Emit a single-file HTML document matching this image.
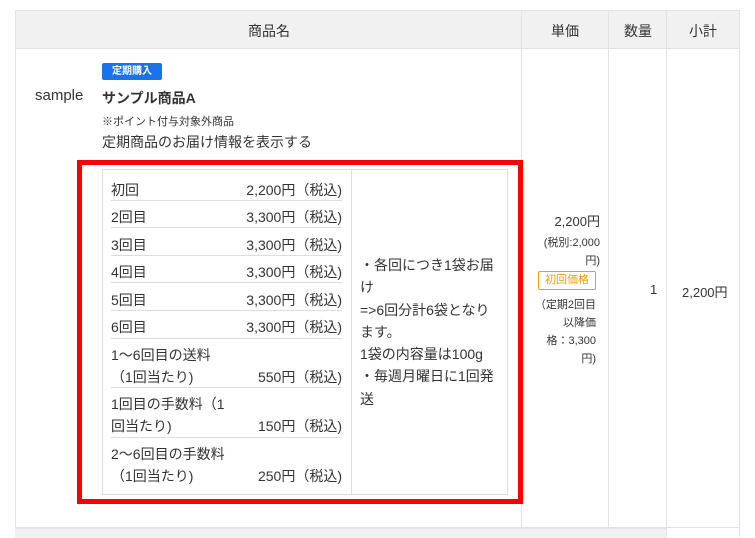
<!DOCTYPE html>
<html><head><meta charset="utf-8"><style>
body{margin:0;width:755px;height:537px;background:#fff;font-family:"Liberation Sans","Noto Sans CJK JP",sans-serif;color:#333;position:relative;overflow:hidden}
.a{position:absolute;white-space:nowrap}
.r{position:absolute;left:111px;width:231px;font-size:14px;color:#333}
.r span{float:right}
.ln{position:absolute;left:111px;width:231px;height:1px;background:#ddd}
</style></head><body>
<div class="a" style="left:15px;top:10px;width:725px;height:39px;background:#f1f1f1;border:1px solid #e3e3e3;box-sizing:border-box"></div>
<div class="a" style="left:15px;top:49px;width:725px;height:479px;border:1px solid #e3e3e3;border-top:none;box-sizing:border-box"></div>
<div class="a" style="left:521px;top:10px;width:1px;height:518px;background:#e3e3e3"></div>
<div class="a" style="left:608px;top:10px;width:1px;height:518px;background:#e3e3e3"></div>
<div class="a" style="left:666px;top:10px;width:1px;height:527px;background:#e3e3e3"></div>
<div class="a" style="left:15px;top:528px;width:651px;height:9px;background:#f1f1f1;border-top:1px solid #e3e3e3"></div>
<div class="a" style="left:739px;top:528px;width:1px;height:9px;background:#e3e3e3"></div>
<div class="a" style="left:248px;top:21px;font-size:14px">商品名</div>
<div class="a" style="left:551px;top:21px;font-size:14px">単価</div>
<div class="a" style="left:624px;top:21px;font-size:14px">数量</div>
<div class="a" style="left:689px;top:21px;font-size:14px">小計</div>
<div class="a" style="left:35px;top:87px;font-size:15px">sample</div>
<div class="a" style="left:102px;top:63px;width:60px;height:17px;background:#1a73e8;border-radius:2px;color:#fff;font-size:10px;font-weight:bold;text-align:center;line-height:17px">定期購入</div>
<div class="a" style="left:102px;top:88px;font-size:14px;font-weight:bold">サンプル商品A</div>
<div class="a" style="left:102px;top:113px;font-size:11px">※ポイント付与対象外商品</div>
<div class="a" style="left:102px;top:132px;font-size:14px">定期商品のお届け情報を表示する</div>
<div class="a" style="left:77px;top:160px;width:446px;height:344px;border:5px solid #f00;box-sizing:border-box"></div>
<div class="a" style="left:102px;top:169px;width:406px;height:326px;border:1px solid #ddd;box-sizing:border-box"></div>
<div class="a" style="left:351px;top:169px;width:1px;height:326px;background:#ddd"></div>
<div class="r" style="top:180px">初回<span>2,200円（税込)</span></div>
<div class="ln" style="top:200px"></div>
<div class="r" style="top:207px">2回目<span>3,300円（税込)</span></div>
<div class="ln" style="top:227px"></div>
<div class="r" style="top:235px">3回目<span>3,300円（税込)</span></div>
<div class="ln" style="top:255px"></div>
<div class="r" style="top:262px">4回目<span>3,300円（税込)</span></div>
<div class="ln" style="top:282px"></div>
<div class="r" style="top:290px">5回目<span>3,300円（税込)</span></div>
<div class="ln" style="top:310px"></div>
<div class="r" style="top:317px">6回目<span>3,300円（税込)</span></div>
<div class="ln" style="top:338px"></div>
<div class="r" style="top:345px">1〜6回目の送料</div>
<div class="r" style="top:367px">（1回当たり)<span>550円（税込)</span></div>
<div class="ln" style="top:387px"></div>
<div class="r" style="top:394px">1回目の手数料（1</div>
<div class="r" style="top:416px">回当たり)<span>150円（税込)</span></div>
<div class="ln" style="top:437px"></div>
<div class="r" style="top:444px">2〜6回目の手数料</div>
<div class="r" style="top:466px">（1回当たり)<span>250円（税込)</span></div>
<div class="a" style="left:360px;top:254px;font-size:14px;line-height:22.3px">・各回につき1袋お届<br>け<br>=&gt;6回分計6袋となり<br>ます。<br>1袋の内容量は100g<br>・毎週月曜日に1回発<br>送</div>
<div class="a" style="left:530px;top:211px;width:70px;text-align:right;font-size:13px">2,200円</div>
<div class="a" style="left:530px;top:234px;width:70px;text-align:right;font-size:11px;line-height:18px;white-space:normal">(税別:2,000<br>円)</div>
<div class="a" style="left:538px;top:271px;width:56px;height:17px;border:1px solid #f90;border-radius:2px;color:#f90;font-size:11px;text-align:center;line-height:17px;box-sizing:content-box">初回価格</div>
<div class="a" style="left:530px;top:296px;width:66px;text-align:right;font-size:11px;line-height:18px">（定期2回目<br>以降価<br>格：3,300<br>円)</div>
<div class="a" style="left:650px;top:282px;font-size:13px">1</div>
<div class="a" style="left:682px;top:282px;font-size:13px">2,200円</div>
</body></html>
